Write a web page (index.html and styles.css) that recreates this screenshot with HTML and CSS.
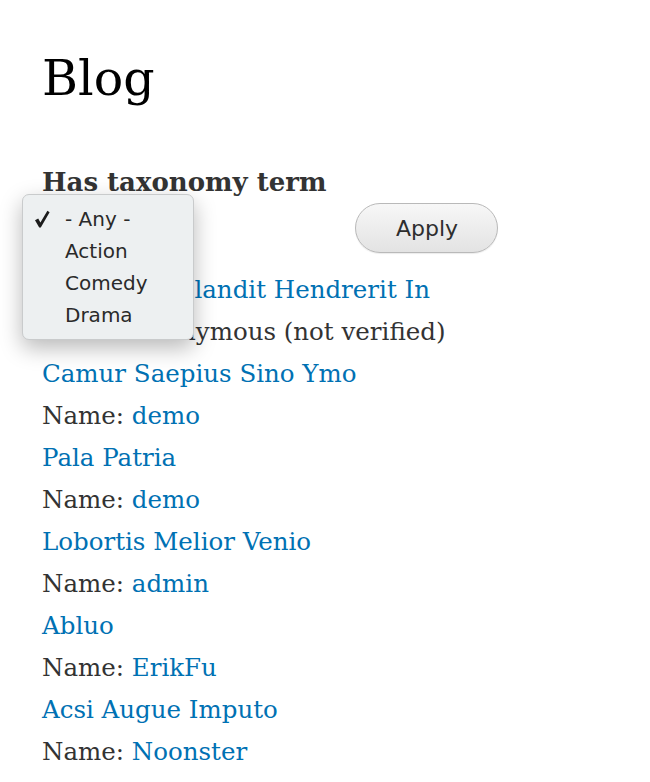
FILE: index.html
```html
<!DOCTYPE html>
<html lang="en">
<head>
<meta charset="utf-8">
<title>Blog</title>
<link rel="stylesheet" href="styles.css">
</head>
<body>
<main class="page">
  <h1 class="title">Blog</h1>
  <form class="filters">
    <div class="form-item">
      <label class="label">Has taxonomy term</label>
      <div class="select-wrap">
        <div class="select-box">- Any -</div>
        <ul class="popup">
          <li class="opt checked"><svg class="check" viewBox="0 0 16 18" width="16" height="18"><path d="M1 10.2 L4.2 8.4 L6.4 12.6 L13.4 0.8 L15.6 2.2 L6.8 17.4 L5.2 17.4 Z" fill="#1c1c1c"/></svg>- Any -</li>
          <li class="opt">Action</li>
          <li class="opt">Comedy</li>
          <li class="opt">Drama</li>
        </ul>
      </div>
    </div>
    <button type="button" class="apply">Apply</button>
  </form>
  <div class="rows">
    <div class="row"><a href="#">Aliquip Ut Blandit Hendrerit In</a></div>
    <div class="row">Name: Anonymous (not verified)</div>
    <div class="row"><a href="#">Camur Saepius Sino Ymo</a></div>
    <div class="row">Name: <a href="#">demo</a></div>
    <div class="row"><a href="#">Pala Patria</a></div>
    <div class="row">Name: <a href="#">demo</a></div>
    <div class="row"><a href="#">Lobortis Melior Venio</a></div>
    <div class="row">Name: <a href="#">admin</a></div>
    <div class="row"><a href="#">Abluo</a></div>
    <div class="row">Name: <a href="#">ErikFu</a></div>
    <div class="row"><a href="#">Acsi Augue Imputo</a></div>
    <div class="row">Name: <a href="#">Noonster</a></div>
    <div class="row"><a href="#">Aliquam Ludus</a></div>
  </div>
</main>
</body>
</html>
```
FILE: styles.css
```css
html, body {
  margin: 0;
  padding: 0;
  background: #fff;
  overflow: hidden;
}
body {
  font-family: "DejaVu Serif", Georgia, serif;
  color: #333;
}
.page {
  padding: 44px 0 0 42px;
}
.title {
  margin: 0;
  font-weight: normal;
  font-size: 49px;
  line-height: 70px;
  color: #000;
}
.filters {
  display: flex;
  align-items: flex-end;
  gap: 29px;
  margin-top: 52px;
}
.form-item {
  display: flex;
  flex-direction: column;
}
.label {
  font-weight: bold;
  font-size: 26px;
  line-height: 32px;
}
.select-wrap {
  position: relative;
  height: 55px;
}
.select-box {
  width: 140px;
  height: 24px;
  margin-top: 14px;
  font-family: "DejaVu Sans", sans-serif;
  font-size: 14px;
}
.popup {
  position: absolute;
  left: -20px;
  top: -4px;
  width: 170px;
  margin: 0;
  padding: 8px 0;
  list-style: none;
  background: #edf0f1;
  border: 1px solid #c9cbcc;
  border-radius: 7px;
  box-shadow: 0 8px 22px rgba(0, 0, 0, 0.28);
  font-family: "DejaVu Sans", sans-serif;
  font-size: 20px;
  color: #2a2a2a;
}
.opt {
  position: relative;
  height: 32px;
  line-height: 32px;
  padding-left: 42px;
}
.check {
  position: absolute;
  left: 11px;
  top: 7px;
}
.apply {
  width: 143px;
  height: 50px;
  border: 1px solid #b9b9b9;
  border-radius: 25px;
  background: linear-gradient(#f7f7f7, #e3e3e3);
  box-shadow: 0 1px 1px rgba(0, 0, 0, 0.08);
  font-family: "DejaVu Sans", sans-serif;
  font-size: 22px;
  color: #2e2e2e;
  padding: 0;
}
.rows {
  margin-top: 16px;
}
.row {
  font-size: 24.5px;
  line-height: 42px;
}
.row a {
  color: #0071b3;
  text-decoration: none;
}
```
